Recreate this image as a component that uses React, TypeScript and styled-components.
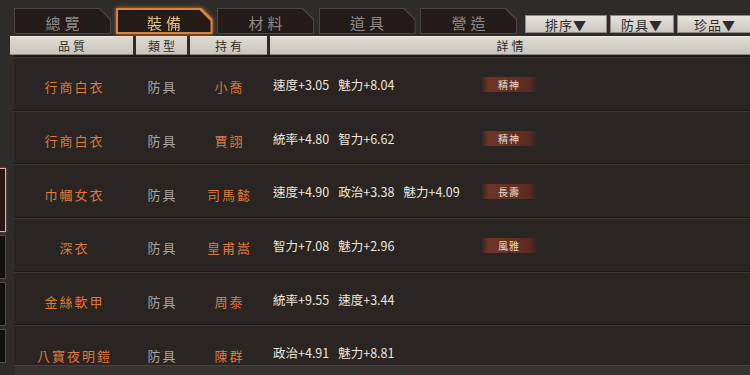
import React from "react";
import styled, { createGlobalStyle, css } from "styled-components";

const Global = createGlobalStyle`
  html, body { margin: 0; padding: 0; background: #2d2c2b; }
  body { width: 750px; height: 375px; overflow: hidden; font-family: "Noto Sans CJK TC", "Noto Sans CJK SC", "Liberation Sans", sans-serif; }
`;

const Page = styled.div`
  width: 750px;
  height: 375px;
  display: flex;
  flex-direction: column;
  background: #2d2c2b;
  overflow: hidden;
`;

const TopBar = styled.div`
  display: flex;
  align-items: flex-end;
  height: 34px;
  padding-left: 14px;
  box-sizing: border-box;
`;

const Tabs = styled.div`
  display: flex;
  gap: 4.5px;
  align-items: flex-end;
`;

const TabWrap = styled.div<{ $active?: boolean }>`
  width: 97px;
  height: 26px;
  ${(p) =>
    p.$active &&
    css`
      filter: drop-shadow(0 0 2px rgba(230, 130, 50, 0.85));
    `}
`;

const cut = "polygon(0 0, calc(100% - 11px) 0, 100% 11px, 100% 100%, 0 100%)";

const TabBorder = styled.div<{ $active?: boolean }>`
  width: 100%;
  height: 100%;
  box-sizing: border-box;
  padding: ${(p) => (p.$active ? "2px" : "1px")};
  clip-path: ${cut};
  background: ${(p) => (p.$active ? "#d8843c" : "#4d4440")};
`;

const TabInner = styled.div<{ $active?: boolean }>`
  width: 100%;
  height: 100%;
  clip-path: ${cut};
  background: ${(p) => (p.$active ? "#241b18" : "#231b19")};
  display: flex;
  align-items: center;
  justify-content: center;
  font-size: 15px;
  letter-spacing: 4px;
  padding: 2px 0 0 4px;
  box-sizing: border-box;
  color: ${(p) => (p.$active ? "#e2c27a" : "#8f8a86")};
`;

const Drops = styled.div`
  display: flex;
  gap: 3px;
  margin-left: 8px;
  padding-bottom: 1px;
`;

const Drop = styled.div<{ $w: number }>`
  width: ${(p) => p.$w}px;
  height: 18px;
  box-sizing: border-box;
  background: linear-gradient(#e6e3dc, #cbc7bf);
  border: 1px solid #8d8a85;
  display: flex;
  align-items: center;
  justify-content: center;
  font-size: 13px;
  color: #2e2c2a;
  letter-spacing: 1px;
`;

const HeadRow = styled.div`
  display: grid;
  grid-template-columns: 123px 51px 77px 1fr;
  gap: 3px;
  padding-left: 10px;
  margin-top: 2px;
  height: 16px;
`;

const HeadCell = styled.div`
  background: linear-gradient(#dedbd3, #c9c5bc);
  border-top: 1px solid #f0ede6;
  border-bottom: 1px solid #8a8680;
  box-sizing: border-box;
  display: flex;
  align-items: center;
  justify-content: center;
  font-size: 12px;
  letter-spacing: 3px;
  padding-left: 3px;
  color: #2e2c2a;
`;

const BodyArea = styled.div`
  display: flex;
  margin-top: 3px;
  flex: 1;
  min-height: 0;
`;

const Rail = styled.div`
  width: 6px;
  display: flex;
  flex-direction: column;
  gap: 3px;
  padding-top: 113px;
`;

const RailBox = styled.div<{ $h: number; $hot?: boolean }>`
  height: ${(p) => p.$h}px;
  flex-shrink: 0;
  box-sizing: border-box;
  border: 1px solid ${(p) => (p.$hot ? "#e6ad9c" : "#5a4a3e")};
  border-left: none;
  background: ${(p) => (p.$hot ? "#2a1614" : "#120f0e")};
  ${(p) => p.$hot && css`box-shadow: 0 0 3px rgba(220, 120, 100, 0.6);`}
`;

const TableCol = styled.div`
  flex: 1;
  margin-left: 8px;
  display: flex;
  flex-direction: column;
`;

const Table = styled.div`
  height: 310px;
  flex-shrink: 0;
  overflow: hidden;
  background: #2a2523;
  display: flex;
  flex-direction: column;
  border-top: 2px solid #1d1918;
  box-sizing: border-box;
  box-shadow: inset 0 1px 0 #3a3330;
`;

const Row = styled.div`
  display: grid;
  grid-template-columns: 119px 51px 77px 1fr;
  gap: 3px;
  height: 53.7px;
  flex-shrink: 0;
  box-sizing: border-box;
  align-items: center;
  border-bottom: 1px solid #1c1817;
  box-shadow: 0 1px 0 #3e3633;
  padding-top: 7px;
`;

const Cell = styled.div<{ $tone: "orange" | "grey" }>`
  text-align: center;
  font-size: 13px;
  letter-spacing: 2px;
  padding-left: 2px;
  color: ${(p) => (p.$tone === "orange" ? "#dc7a3c" : "#a7a39f")};
`;

const Detail = styled.div`
  display: grid;
  grid-template-columns: 208px 56px;
  align-items: center;
  padding-left: 3px;
  margin-top: -5px;
`;

const Stats = styled.div`
  display: flex;
  gap: 9px;
  font-size: 12.5px;
  color: #ece6dc;
  white-space: nowrap;
`;

const Tag = styled.div`
  height: 15px;
  display: flex;
  align-items: center;
  justify-content: center;
  font-size: 10px;
  letter-spacing: 1px;
  color: #eadbcc;
  background: linear-gradient(90deg, rgba(110, 52, 38, 0) 0%, #6e3526 14%, #5c2b20 86%, rgba(92, 43, 32, 0) 100%);
`;

const Footer = styled.div`
  flex: 1;
  background: #363331;
  border-top: 1px solid #46403d;
`;

type Item = { name: string; holder: string; stats: string[]; tag?: string };

const items: Item[] = [
  { name: "行商白衣", holder: "小喬", stats: ["速度+3.05", "魅力+8.04"], tag: "精神" },
  { name: "行商白衣", holder: "賈詡", stats: ["統率+4.80", "智力+6.62"], tag: "精神" },
  { name: "巾幗女衣", holder: "司馬懿", stats: ["速度+4.90", "政治+3.38", "魅力+4.09"], tag: "長壽" },
  { name: "深衣", holder: "皇甫嵩", stats: ["智力+7.08", "魅力+2.96"], tag: "風雅" },
  { name: "金絲軟甲", holder: "周泰", stats: ["統率+9.55", "速度+3.44"] },
  { name: "八寶夜明鎧", holder: "陳群", stats: ["政治+4.91", "魅力+8.81"] },
];

const tabs = ["總覽", "裝備", "材料", "道具", "營造"];

export default function App() {
  return (
    <Page>
      <Global />
      <TopBar>
        <Tabs>
          {tabs.map((t) => (
            <TabWrap key={t} $active={t === "裝備"}>
              <TabBorder $active={t === "裝備"}>
                <TabInner $active={t === "裝備"}>{t}</TabInner>
              </TabBorder>
            </TabWrap>
          ))}
        </Tabs>
        <Drops>
          <Drop $w={82}>排序▼</Drop>
          <Drop $w={64}>防具▼</Drop>
          <Drop $w={76}>珍品▼</Drop>
        </Drops>
      </TopBar>
      <HeadRow>
        <HeadCell>品質</HeadCell>
        <HeadCell>類型</HeadCell>
        <HeadCell>持有</HeadCell>
        <HeadCell>詳情</HeadCell>
      </HeadRow>
      <BodyArea>
        <Rail>
          <RailBox $h={64} $hot />
          <RailBox $h={44} />
          <RailBox $h={44} />
          <RailBox $h={34} />
        </Rail>
        <TableCol>
          <Table>
            {items.map((it, i) => (
              <Row key={i}>
                <Cell $tone="orange">{it.name}</Cell>
                <Cell $tone="grey">防具</Cell>
                <Cell $tone="orange">{it.holder}</Cell>
                <Detail>
                  <Stats>
                    {it.stats.map((s) => (
                      <span key={s}>{s}</span>
                    ))}
                  </Stats>
                  {it.tag ? <Tag>{it.tag}</Tag> : <span />}
                </Detail>
              </Row>
            ))}
          </Table>
          <Footer />
        </TableCol>
      </BodyArea>
    </Page>
  );
}
